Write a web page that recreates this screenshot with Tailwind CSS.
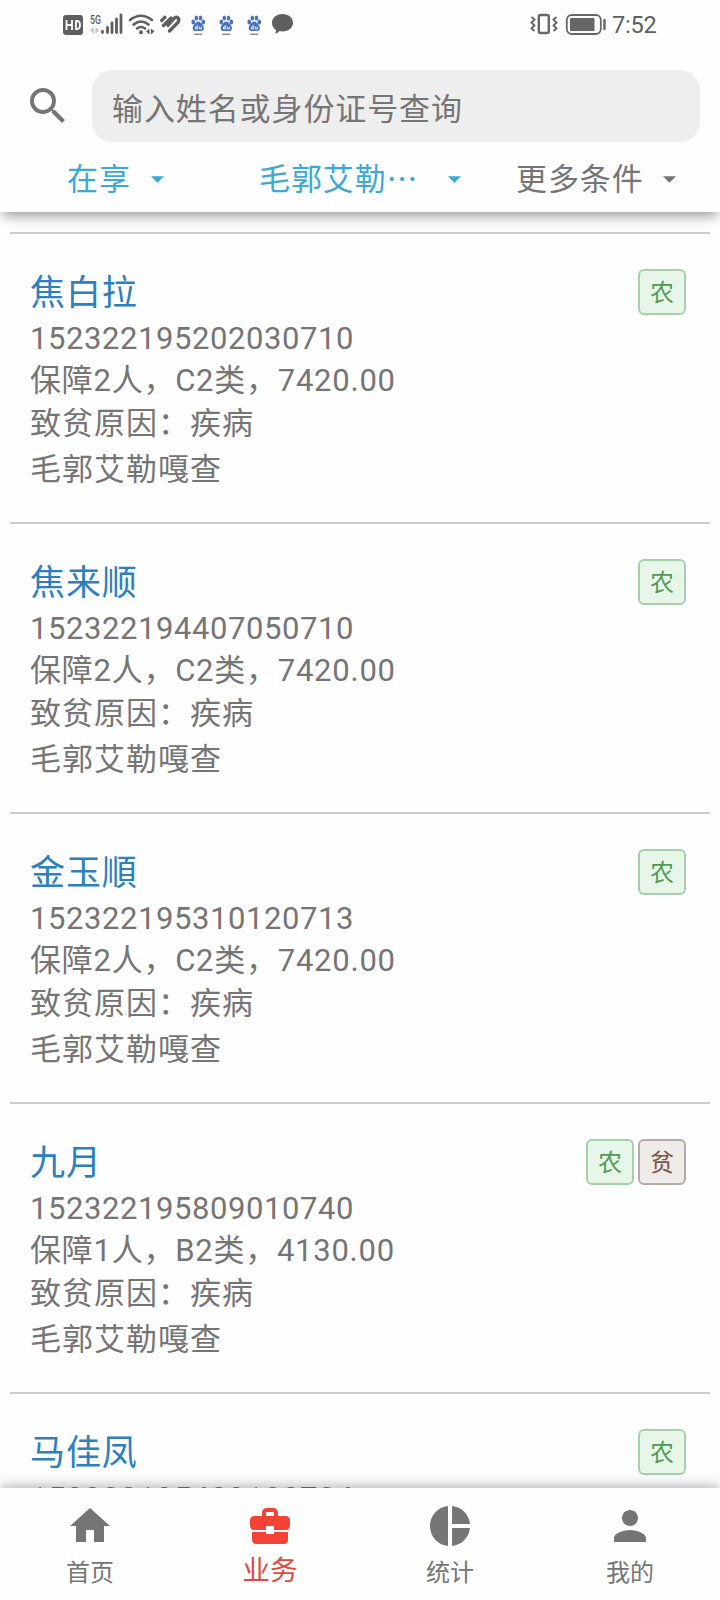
<!DOCTYPE html>
<html lang="zh-CN">
<head>
    <meta charset="utf-8">
    <meta name="viewport" content="width=device-width, initial-scale=1">
    <title>业务</title>
    <script src="https://cdn.jsdelivr.net/npm/@tailwindcss/browser@4"></script>
</head>
<body class="bg-[#fefefe] font-[Roboto,'Noto_Sans_CJK_SC',sans-serif] text-[#757575]">
<div class="flex h-[1600px] w-[720px] flex-col overflow-hidden">
    <!-- top bar -->
    <header class="relative z-10 h-[212px] shrink-0 bg-[#fefefe] shadow-[0_7px_12px_-3px_rgba(0,0,0,0.4)]">
        <div class="flex h-12 items-center pl-[63px] pr-[63px] text-[#5f5f5f]">
            <svg class="h-12 w-[232px]" viewBox="63 0 232 48" fill="none">
                <rect x="63" y="15" width="20" height="20" rx="3" fill="#5f5f5f"/>
                <path d="M66.500 20v10M72 20v10M66.500 25H72M76 21h1q3 0 3 4t-3 4h-1z" stroke="#fff" stroke-width="1.800"/>
                <text x="90" y="23.500" font-size="13" font-weight="500" fill="#5f5f5f" textLength="11" lengthAdjust="spacingAndGlyphs">5G</text>
                <path d="M94 27v7l-4-3.500zM95.500 27v7l3.500-3.500z" fill="#c8c8c8"/>
                <path d="M102.500 31.500v1M107.500 27.500v5M112 23v9.500M116.500 19v13.500M121 15v17.500" stroke="#5f5f5f" stroke-width="2.800" stroke-linecap="round"/>
                <path d="M130 20q11-8.500 22 0M133.500 24.500q7.500-6 15 0M137 28.500q4-3 8 0" stroke="#5f5f5f" stroke-width="2.600" stroke-linecap="round"/>
                <circle cx="141" cy="32.300" r="2" fill="#5f5f5f"/>
                <path d="M149.500 28.500v6l-3.500-3zM151 28.500v6l3.500-3z" fill="#5f5f5f"/>
                <!-- heart made of slanted strokes -->
                <path d="M161.700 20.500l3.300-3.300M163.500 25.500l7.500-7.500M168 25.500l6.500-7.500q2-1.500 3.500 0t.3 4L169.500 31" stroke="#5f5f5f" stroke-width="3.300" stroke-linecap="round" stroke-linejoin="round"/>
                <g id="paw" fill="#4a72b8">
                    <ellipse cx="193.300" cy="22" rx="1.900" ry="2.600"/>
                    <ellipse cx="196.300" cy="18" rx="1.800" ry="2.600"/>
                    <ellipse cx="200.500" cy="18" rx="1.800" ry="2.600"/>
                    <ellipse cx="203.300" cy="22" rx="1.900" ry="2.600"/>
                    <path d="M198.300 21.500c-2 0-3 2-4.500 3.500-1.300 1.500-2 6 1.200 6h6.600c3.200 0 2.500-4.500 1.200-6-1.500-1.500-2.500-3.500-4.500-3.500z"/>
                    <path d="M197.300 25v4h-1.800v-2h1.800M199.300 26.500V29h2v-2.500" stroke="#e8effa" stroke-width="1" fill="none"/>
                    <path d="M194.300 33.700h8v1h-8z" fill="#555"/>
                </g>
                <use href="#paw" x="28"/>
                <use href="#paw" x="56"/>
                <path d="M282.500 14c6 0 10.500 3.700 10.500 8.700s-4.500 8.700-10.500 8.700c-1.200 0-2-.1-3-.3-1 1.500-2.600 2.500-4.700 2.500.8-1 1.300-2.400 1.200-3.700-2.600-1.600-4-4.200-4-7.200 0-5 4.500-8.700 10.500-8.700z" fill="#5f5f5f"/>
            </svg>
            <div class="ml-auto flex items-center">
                <svg class="h-12 w-[78px]" viewBox="530 0 78 48" fill="none" stroke="#666">
                    <rect x="538.800" y="15" width="10" height="18" rx="2" stroke-width="2.400"/>
                    <path d="M531.500 17l3 2.500-3 3 3 3-3 3 3 2.500M556.500 17l-3 2.500 3 3-3 3 3 3-3 2.500" stroke-width="1.900"/>
                    <rect x="566.800" y="15" width="34" height="19" rx="5" stroke-width="1.800"/>
                    <path d="M570.500 18.500H594v12h-23.500z" fill="#666" stroke-width="1"/>
                    <path d="M604.500 20v9" stroke-width="2.400" stroke-linecap="round"/>
                </svg>
                <span class="ml-1 w-[45px] pt-1 text-[23.500px] leading-none tracking-[-0.2px]">7:52</span>
            </div>
        </div>
        <div class="mt-[22px] flex h-[72px] items-center pl-6 pr-5">
            <svg class="size-12 shrink-0" viewBox="0 0 24 24" fill="#757575"><path d="M15.500 14h-.79l-.28-.27A6.470 6.470 0 0 0 16 9.500 6.500 6.500 0 1 0 9.500 16c1.610 0 3.090-.59 4.230-1.570l.27.28v.79l5 4.990L20.490 19l-4.990-5zm-6 0C7.010 14 5 11.990 5 9.500S7.010 5 9.500 5 14 7.010 14 9.500 11.990 14 9.500 14z"/></svg>
            <div class="ml-5 flex h-full flex-1 items-center rounded-[20px] bg-[#eeeeee] pl-5 pt-1.5 text-[31px] leading-none tracking-[0.9px]">输入姓名或身份证号查询</div>
        </div>
        <div class="flex h-[70px] items-center pt-[5px] text-[31px] leading-none tracking-[0.9px] text-[#3aa9d6]">
            <div class="flex w-[193px] items-center pl-[67px]">
                <span>在享</span>
                <svg class="ml-5 h-[7px] w-[13px]" viewBox="0 0 12 6" fill="currentColor"><path d="M0 0h12L6 6z"/></svg>
            </div>
            <div class="flex w-[297px] items-center pl-[66px]">
                <span class="w-[189px]">毛郭艾勒⋯</span>
                <svg class="h-[7px] w-[13px]" viewBox="0 0 12 6" fill="currentColor"><path d="M0 0h12L6 6z"/></svg>
            </div>
            <div class="flex items-center pl-[26px] text-[#757575]">
                <span>更多条件</span>
                <svg class="ml-[19px] h-[7px] w-[13px]" viewBox="0 0 12 6" fill="currentColor"><path d="M0 0h12L6 6z"/></svg>
            </div>
        </div>
    </header>

    <!-- people list -->
    <main class="flex-1 overflow-hidden px-2.5 pt-5">
        <section class="h-[290px] border-t-2 border-[#cccccc] px-5 pt-[35px]">
            <div class="flex h-[49px] justify-between">
                <h2 class="text-[35px] leading-[50px] tracking-[0.9px] text-[#2b80c0]">焦白拉</h2>
                <div class="flex gap-1 pr-1">
                    <span class="flex h-[46px] w-12 items-center justify-center rounded-md border-2 border-[#a5d0ab] bg-[#e8f6e9] pt-0.5 text-2xl text-[#519a56]">农</span>
                </div>
            </div>
            <p class="h-[42px] text-[31px] leading-[42px] tracking-[0.58px]">152322195202030710</p>
            <p class="h-[43px] text-[31px] leading-[42px] tracking-[0.75px]">保障2人，C2类，7420.00</p>
            <p class="h-[46px] text-[31px] leading-[42px] tracking-[1px]">致贫原因：疾病</p>
            <p class="text-[31px] leading-[42px] tracking-[1px]">毛郭艾勒嘎查</p>
        </section>
        <section class="h-[290px] border-t-2 border-[#cccccc] px-5 pt-[35px]">
            <div class="flex h-[49px] justify-between">
                <h2 class="text-[35px] leading-[50px] tracking-[0.9px] text-[#2b80c0]">焦来顺</h2>
                <div class="flex gap-1 pr-1">
                    <span class="flex h-[46px] w-12 items-center justify-center rounded-md border-2 border-[#a5d0ab] bg-[#e8f6e9] pt-0.5 text-2xl text-[#519a56]">农</span>
                </div>
            </div>
            <p class="h-[42px] text-[31px] leading-[42px] tracking-[0.58px]">152322194407050710</p>
            <p class="h-[43px] text-[31px] leading-[42px] tracking-[0.75px]">保障2人，C2类，7420.00</p>
            <p class="h-[46px] text-[31px] leading-[42px] tracking-[1px]">致贫原因：疾病</p>
            <p class="text-[31px] leading-[42px] tracking-[1px]">毛郭艾勒嘎查</p>
        </section>
        <section class="h-[290px] border-t-2 border-[#cccccc] px-5 pt-[35px]">
            <div class="flex h-[49px] justify-between">
                <h2 class="text-[35px] leading-[50px] tracking-[0.9px] text-[#2b80c0]">金玉順</h2>
                <div class="flex gap-1 pr-1">
                    <span class="flex h-[46px] w-12 items-center justify-center rounded-md border-2 border-[#a5d0ab] bg-[#e8f6e9] pt-0.5 text-2xl text-[#519a56]">农</span>
                </div>
            </div>
            <p class="h-[42px] text-[31px] leading-[42px] tracking-[0.58px]">152322195310120713</p>
            <p class="h-[43px] text-[31px] leading-[42px] tracking-[0.75px]">保障2人，C2类，7420.00</p>
            <p class="h-[46px] text-[31px] leading-[42px] tracking-[1px]">致贫原因：疾病</p>
            <p class="text-[31px] leading-[42px] tracking-[1px]">毛郭艾勒嘎查</p>
        </section>
        <section class="h-[290px] border-t-2 border-[#cccccc] px-5 pt-[35px]">
            <div class="flex h-[49px] justify-between">
                <h2 class="text-[35px] leading-[50px] tracking-[0.9px] text-[#2b80c0]">九月</h2>
                <div class="flex gap-1 pr-1">
                    <span class="flex h-[46px] w-12 items-center justify-center rounded-md border-2 border-[#a5d0ab] bg-[#e8f6e9] pt-0.5 text-2xl text-[#519a56]">农</span>
                    <span class="flex h-[46px] w-12 items-center justify-center rounded-md border-2 border-[#b5aaa7] bg-[#efebe9] pt-0.5 text-2xl text-[#795548]">贫</span>
                </div>
            </div>
            <p class="h-[42px] text-[31px] leading-[42px] tracking-[0.58px]">152322195809010740</p>
            <p class="h-[43px] text-[31px] leading-[42px] tracking-[0.75px]">保障1人，B2类，4130.00</p>
            <p class="h-[46px] text-[31px] leading-[42px] tracking-[1px]">致贫原因：疾病</p>
            <p class="text-[31px] leading-[42px] tracking-[1px]">毛郭艾勒嘎查</p>
        </section>
        <section class="h-[290px] border-t-2 border-[#cccccc] px-5 pt-[35px]">
            <div class="flex h-[49px] justify-between">
                <h2 class="text-[35px] leading-[50px] tracking-[0.9px] text-[#2b80c0]">马佳凤</h2>
                <div class="flex gap-1 pr-1">
                    <span class="flex h-[46px] w-12 items-center justify-center rounded-md border-2 border-[#a5d0ab] bg-[#e8f6e9] pt-0.5 text-2xl text-[#519a56]">农</span>
                </div>
            </div>
            <p class="h-[42px] text-[31px] leading-[42px] tracking-[0.58px]">152322195409180724</p>
        </section>
    </main>

    <!-- bottom tabs -->
    <nav class="relative z-10 grid h-28 shrink-0 grid-cols-4 bg-[#fefefe] pt-3.5 text-2xl leading-[47px] shadow-[0_-2px_12px_rgba(0,0,0,0.3)]">
        <a class="flex flex-col items-center">
            <svg class="size-12" viewBox="0 0 24 24" fill="currentColor"><path d="M10 20v-6h4v6h5v-8h3L12 3 2 12h3v8z"/></svg>
            <span>首页</span>
        </a>
        <a class="flex flex-col items-center text-[#f44336]">
            <svg class="size-12" viewBox="0 0 24 24" fill="currentColor"><path fill-rule="evenodd" d="M10 16v-1H3v4c0 1.100.9 2 2 2h14c1.100 0 2-.9 2-2v-4h-7v1zM20 7h-4V5.500C16 4 15 3 13.500 3h-3C9 3 8 4 8 5.500V7H4c-1.100 0-2 .9-2 2v3c0 1.100.9 2 2 2h6v-2h4v2h6c1.100 0 2-.9 2-2V9c0-1.100-.9-2-2-2zm-6 0h-4V5.500c0-.3.2-.5.5-.5h3c.3 0 .5.200.5.500z"/></svg>
            <span class="text-[27.5px] leading-[42px] text-[#e04a3f]">业务</span>
        </a>
        <a class="flex flex-col items-center">
            <svg class="size-12" viewBox="0 0 24 24" fill="currentColor"><path d="M11 2v20c-5.070-.5-9-4.790-9-10s3.930-9.500 9-10zm2.030 0v8.990H22c-.47-4.740-4.240-8.520-8.970-8.990zm0 11.010V22c4.740-.47 8.500-4.250 8.970-8.990z"/></svg>
            <span>统计</span>
        </a>
        <a class="flex flex-col items-center">
            <svg class="size-12" viewBox="0 0 24 24" fill="currentColor"><path d="M12 12c2.210 0 4-1.790 4-4s-1.790-4-4-4-4 1.790-4 4 1.790 4 4 4zm0 2c-2.670 0-8 1.340-8 4v2h16v-2c0-2.660-5.330-4-8-4z"/></svg>
            <span>我的</span>
        </a>
    </nav>
</div>
</body>
</html>
